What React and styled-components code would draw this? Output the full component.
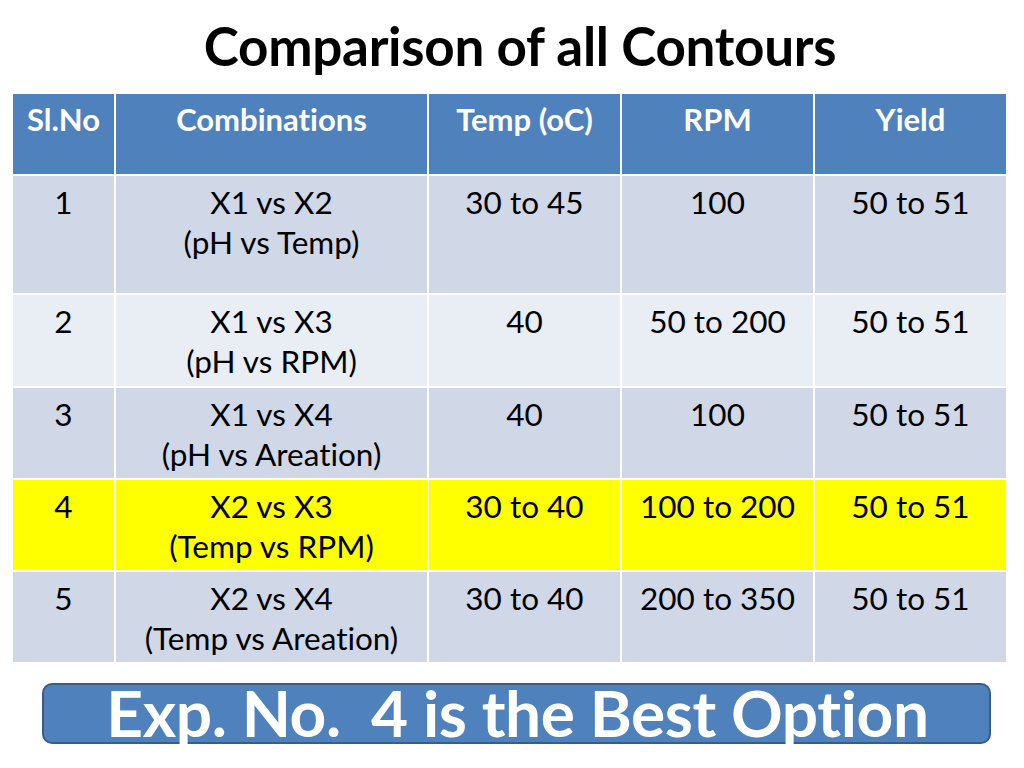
import React from "react";
import styled, { createGlobalStyle } from "styled-components";

const Global = createGlobalStyle`
  html, body { margin: 0; padding: 0; background: #ffffff; }
  body {
    font-family: Lato, "Open Sans", "Liberation Sans", sans-serif;
    font-variant-ligatures: none;
  }
`;

const Slide = styled.div`
  width: 1024px;
  height: 768px;
  background: #ffffff;
  display: flex;
  flex-direction: column;
  align-items: flex-start;
  overflow: hidden;
`;

const Title = styled.h1`
  margin: 0;
  width: 100%;
  padding: 16px 0 0 16px;
  height: 94px;
  box-sizing: border-box;
  font-size: 53px;
  font-weight: 700;
  line-height: 60px;
  color: #000;
  text-align: center;
  letter-spacing: -0.3px;
`;

const Table = styled.div`
  width: 993px;
  margin-left: 13px;
  display: grid;
  grid-template-columns: 101px 311px 191px 191px 191px;
  column-gap: 2px;
  row-gap: 2px;
`;

const Cell = styled.div`
  height: ${(p) => p.$h}px;
  background: ${(p) => p.$bg};
  color: ${(p) => (p.$head ? "#ffffff" : "#000000")};
  font-weight: ${(p) => (p.$head ? 700 : 400)};
  font-size: ${(p) => (p.$head ? 31 : 31.5)}px;
  line-height: 40px;
  text-align: center;
  padding-top: ${(p) => (p.$head ? 5 : 6)}px;
  box-sizing: border-box;
  white-space: nowrap;
`;

const Banner = styled.div`
  margin-top: 21px;
  margin-left: 42px;
  width: 949px;
  height: 61px;
  box-sizing: border-box;
  background: #4f81bd;
  border: 2px solid #385d8a;
  border-radius: 10px;
  display: flex;
  justify-content: center;
  align-items: flex-start;
  overflow: visible;
`;

const BannerText = styled.div`
  color: #ffffff;
  font-weight: 700;
  font-size: 64px;
  line-height: 64px;
  margin-top: -4px;
  margin-left: 2px;
  white-space: pre;
  letter-spacing: -0.4px;
`;

const headers = ["Sl.No", "Combinations", "Temp (oC)", "RPM", "Yield"];

const rows = [
  { h: 117, bg: "#d0d8e8", c: ["1", ["X1 vs X2", "(pH vs Temp)"], "30 to 45", "100", "50 to 51"] },
  { h: 91, bg: "#e9edf4", c: ["2", ["X1 vs X3", "(pH vs RPM)"], "40", "50 to 200", "50 to 51"] },
  { h: 90, bg: "#d0d8e8", c: ["3", ["X1 vs X4", "(pH vs Areation)"], "40", "100", "50 to 51"] },
  { h: 90, bg: "#ffff00", c: ["4", ["X2 vs X3", "(Temp vs RPM)"], "30 to 40", "100 to 200", "50 to 51"] },
  { h: 90, bg: "#d0d8e8", c: ["5", ["X2 vs X4", "(Temp vs Areation)"], "30 to 40", "200 to 350", "50 to 51"] },
];

export default function App() {
  return (
    <Slide>
      <Global />
      <Title>Comparison of all Contours</Title>
      <Table>
        {headers.map((t) => (
          <Cell key={t} $head $h={80} $bg="#4f81bd">
            {t}
          </Cell>
        ))}
        {rows.map((r, i) =>
          r.c.map((v, j) => (
            <Cell key={`${i}-${j}`} $h={r.h} $bg={r.bg}>
              {Array.isArray(v)
                ? v.map((line) => <div key={line}>{line}</div>)
                : v}
            </Cell>
          ))
        )}
      </Table>
      <Banner>
        <BannerText>{"Exp. No.  4 is the Best Option"}</BannerText>
      </Banner>
    </Slide>
  );
}
